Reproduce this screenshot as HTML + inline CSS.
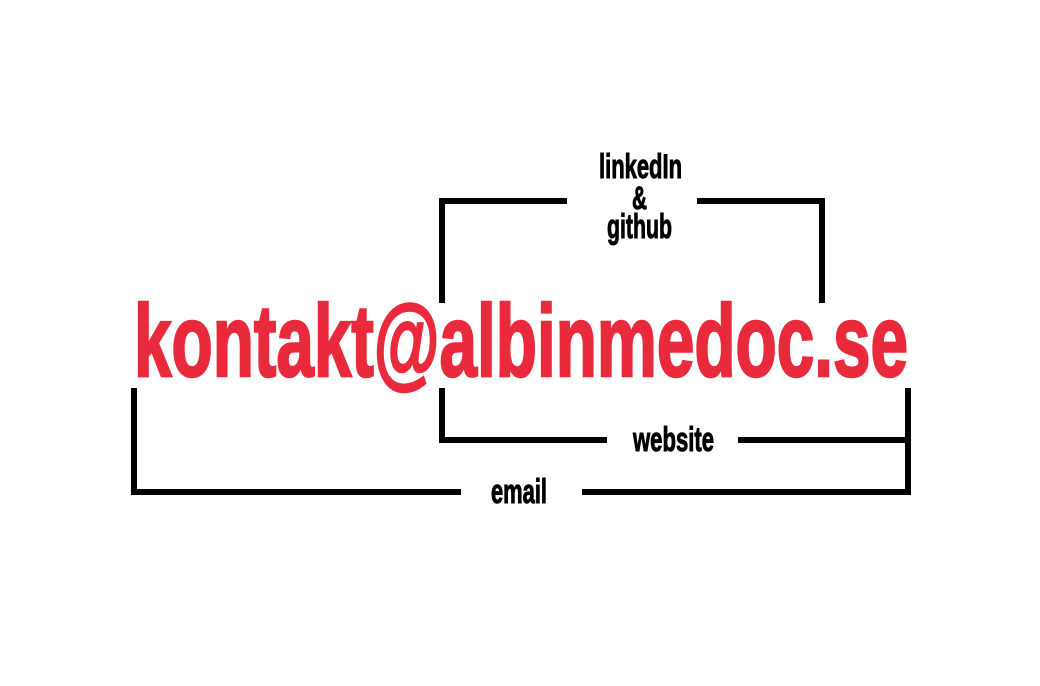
<!DOCTYPE html>
<html><head><style>html,body{margin:0;padding:0;background:#fff;}svg{display:block}</style></head>
<body>
<svg width="1040" height="686" viewBox="0 0 1040 686" xmlns="http://www.w3.org/2000/svg">
<g fill="#000">
<rect x="439" y="198" width="128" height="6"/>
<rect x="439" y="198" width="6" height="105"/>
<rect x="697" y="198" width="128" height="6"/>
<rect x="819" y="198" width="6" height="105"/>
<rect x="439" y="388" width="6" height="55"/>
<rect x="439" y="437" width="168" height="6"/>
<rect x="738" y="437" width="173" height="6"/>
<rect x="905" y="388" width="6" height="107"/>
<rect x="131" y="388" width="6" height="107"/>
<rect x="131" y="489" width="330" height="6"/>
<rect x="582" y="489" width="329" height="6"/>
</g>
<g font-family="'Liberation Sans Narrow','Liberation Sans',sans-serif" font-weight="bold">
<text x="134" y="376" font-size="102" fill="#e82a3c" stroke="#e82a3c" stroke-width="2.5" textLength="774" lengthAdjust="spacingAndGlyphs">kontakt@albinmedoc.se</text>
<g stroke="#000" stroke-width="1">
<text x="599" y="178" font-size="34" fill="#000" textLength="83" lengthAdjust="spacingAndGlyphs">linkedIn</text>
<text x="632" y="209" font-size="32" fill="#000" textLength="15" lengthAdjust="spacingAndGlyphs">&amp;</text>
<text x="607" y="238" font-size="34" fill="#000" textLength="65" lengthAdjust="spacingAndGlyphs">github</text>
<text x="633" y="451" font-size="34" fill="#000" textLength="81" lengthAdjust="spacingAndGlyphs">website</text>
<text x="491" y="503" font-size="34" fill="#000" textLength="56" lengthAdjust="spacingAndGlyphs">email</text>
</g>
</g>
</svg>
</body></html>
